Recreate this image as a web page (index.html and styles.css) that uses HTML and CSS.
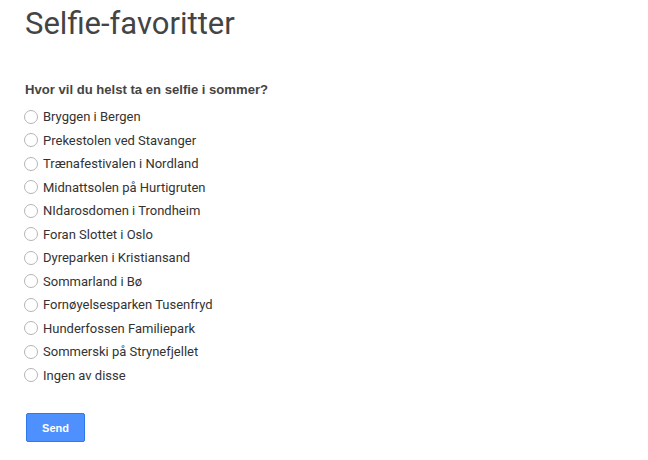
FILE: index.html
```html
<!DOCTYPE html>
<html lang="no">
<head>
<meta charset="utf-8">
<link rel="stylesheet" href="styles.css">
</head>
<body>
<div class="page">
  <h1 class="title">Selfie-favoritter</h1>
  <form class="form">
    <div class="question">Hvor vil du helst ta en selfie i sommer?</div>
    <ul class="options">
      <li class="option"><span class="radio"></span><span>Bryggen i Bergen</span></li>
      <li class="option"><span class="radio"></span><span>Prekestolen ved Stavanger</span></li>
      <li class="option"><span class="radio"></span><span>Trænafestivalen i Nordland</span></li>
      <li class="option"><span class="radio"></span><span>Midnattsolen på Hurtigruten</span></li>
      <li class="option"><span class="radio"></span><span>NIdarosdomen i Trondheim</span></li>
      <li class="option"><span class="radio"></span><span>Foran Slottet i Oslo</span></li>
      <li class="option"><span class="radio"></span><span>Dyreparken i Kristiansand</span></li>
      <li class="option"><span class="radio"></span><span>Sommarland i Bø</span></li>
      <li class="option"><span class="radio"></span><span>Fornøyelsesparken Tusenfryd</span></li>
      <li class="option"><span class="radio"></span><span>Hunderfossen Familiepark</span></li>
      <li class="option"><span class="radio"></span><span>Sommerski på Strynefjellet</span></li>
      <li class="option"><span class="radio"></span><span>Ingen av disse</span></li>
    </ul>
    <button type="button" class="send">Send</button>
  </form>
</div>
</body>
</html>
```
FILE: styles.css
```css
html, body {
  margin: 0;
  padding: 0;
  background: #fff;
}
.page {
  padding: 4px 0 0 25px;
  font-family: Roboto, "Liberation Sans", Arial, sans-serif;
  color: #444;
}
.title {
  margin: 0;
  font-size: 31px;
  font-weight: 400;
  line-height: 40px;
  color: #444;
}
.form {
  margin-top: 37px;
}
.question {
  font-family: "Liberation Sans", Arial, sans-serif;
  font-weight: 700;
  font-size: 13.1px;
  line-height: 18px;
  color: #444;
  margin-bottom: 6px;
}
.options {
  list-style: none;
  margin: 0;
  padding: 0;
}
.option {
  display: flex;
  align-items: center;
  height: 23.5px;
  font-size: 13px;
  color: #333;
}
.radio {
  box-sizing: border-box;
  width: 14px;
  height: 14px;
  border: 1px solid #b5b5b5;
  border-radius: 50%;
  margin-right: 5px;
  margin-left: -1px;
  background: #fff;
}
.send {
  margin-top: 26px;
  margin-left: 1px;
  width: 59px;
  height: 29px;
  border: 1px solid #3079ed;
  border-radius: 2px;
  background: #4d90fe;
  color: #fff;
  font-family: "Liberation Sans", Arial, sans-serif;
  font-weight: 700;
  font-size: 11px;
  padding: 0;
}
```
